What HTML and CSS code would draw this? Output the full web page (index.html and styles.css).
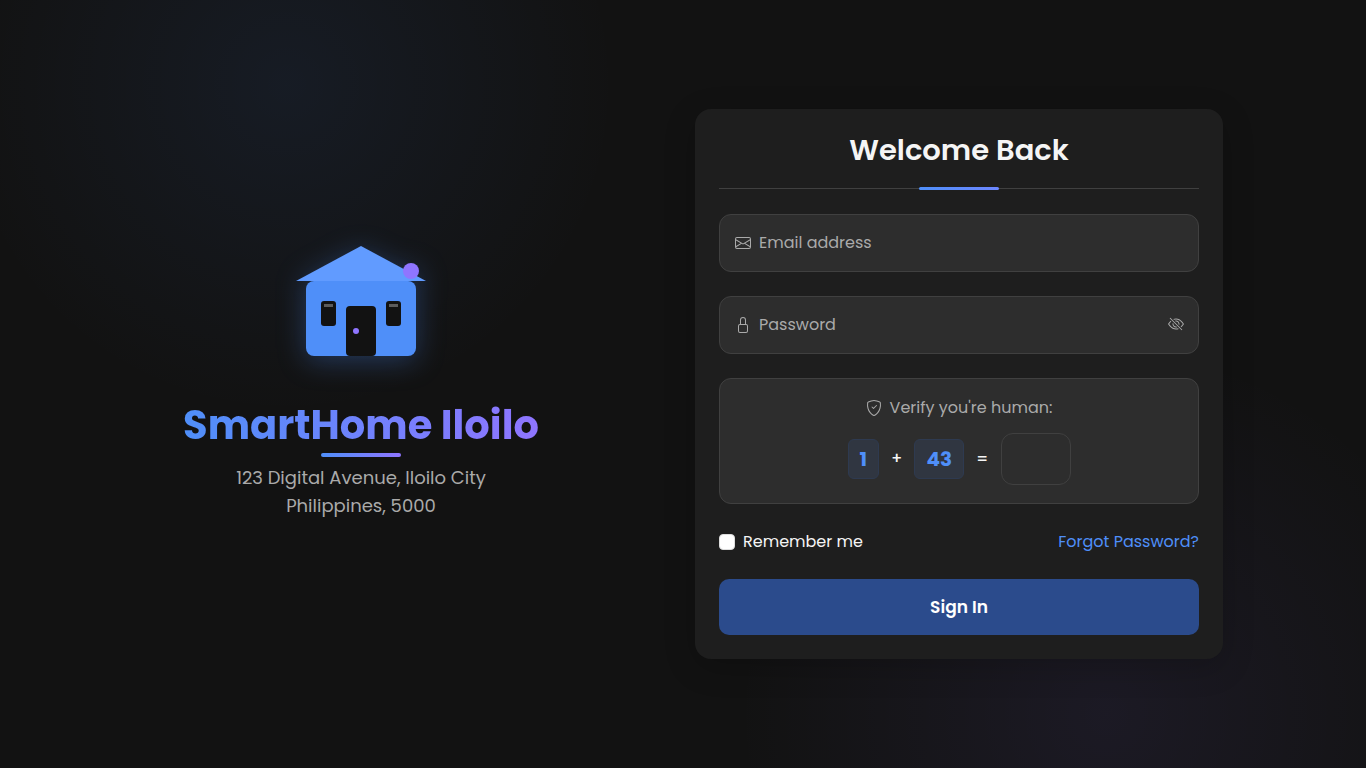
FILE: index.html
```html
<!DOCTYPE html>
<html lang="en">
<head>
<meta charset="utf-8">
<meta name="viewport" content="width=device-width, initial-scale=1">
<title>SmartHome Iloilo - Sign In</title>
<link rel="stylesheet" href="styles.css">
</head>
<body>
<main class="page">
  <section class="brand">
    <svg class="house" viewBox="0 0 130 110" aria-hidden="true">
      <rect x="10" y="35" width="110" height="75" rx="8" fill="#4f8ff9"/>
      <path d="M0 35 65 0l65 35z" fill="#619bff"/>
      <rect x="25" y="55" width="15" height="25" rx="3" fill="#121212"/>
      <rect x="28" y="58" width="9" height="3" fill="#5c5c5c"/>
      <rect x="90" y="55" width="15" height="25" rx="3" fill="#121212"/>
      <rect x="93" y="58" width="9" height="3" fill="#5c5c5c"/>
      <rect x="50" y="60" width="30" height="50" rx="4" fill="#121212"/>
      <circle cx="60" cy="85" r="3" fill="#8f75ff"/>
      <circle cx="115" cy="25" r="8" fill="#8f75ff"/>
    </svg>
    <h1 class="brand-name">SmartHome Iloilo</h1>
    <p class="address">123 Digital Avenue, Iloilo City<br>Philippines, 5000</p>
  </section>

  <section class="login">
    <form class="card">
      <h2 class="card-title">Welcome Back</h2>

      <div class="field">
        <input class="field-input" type="email" id="email" placeholder=" ">
        <label class="field-label" for="email">
          <svg class="icon" viewBox="0 0 16 16" aria-hidden="true"><path d="M0 4a2 2 0 0 1 2-2h12a2 2 0 0 1 2 2v8a2 2 0 0 1-2 2H2a2 2 0 0 1-2-2zm2-1a1 1 0 0 0-1 1v.217l7 4.2 7-4.2V4a1 1 0 0 0-1-1zm13 2.383-4.708 2.825L15 11.105zm-.034 6.876-5.64-3.471L8 9.583l-1.326-.795-5.64 3.47A1 1 0 0 0 2 13h12a1 1 0 0 0 .966-.741M1 11.105l4.708-2.897L1 5.383z"/></svg>
          Email address
        </label>
      </div>

      <div class="field">
        <input class="field-input" type="password" id="password" placeholder=" ">
        <label class="field-label" for="password">
          <svg class="icon" viewBox="0 0 16 16" aria-hidden="true"><path d="M8 1a2 2 0 0 1 2 2v4H6V3a2 2 0 0 1 2-2m3 6V3a3 3 0 0 0-6 0v4a2 2 0 0 0-2 2v5a2 2 0 0 0 2 2h6a2 2 0 0 0 2-2V9a2 2 0 0 0-2-2M5 8h6a1 1 0 0 1 1 1v5a1 1 0 0 1-1 1H5a1 1 0 0 1-1-1V9a1 1 0 0 1 1-1"/></svg>
          Password
        </label>
        <button class="reveal" type="button" aria-label="Show password">
          <svg class="icon" viewBox="0 0 16 16" aria-hidden="true"><path d="M13.359 11.238C15.06 9.72 16 8 16 8s-3-5.5-8-5.5a7 7 0 0 0-2.79.588l.77.771A6 6 0 0 1 8 3.5c2.12 0 3.879 1.168 5.168 2.457A13 13 0 0 1 14.828 8q-.086.13-.195.288c-.335.48-.83 1.12-1.465 1.755q-.247.248-.517.486z"/><path d="M11.297 9.176a3.5 3.5 0 0 0-4.474-4.474l.823.823a2.5 2.5 0 0 1 2.829 2.829zm-2.943 1.299.822.822a3.5 3.5 0 0 1-4.474-4.474l.823.823a2.5 2.5 0 0 0 2.829 2.829"/><path d="M3.35 5.47q-.27.24-.518.487A13 13 0 0 0 1.172 8l.195.288c.335.48.83 1.12 1.465 1.755C4.121 11.332 5.881 12.5 8 12.5c.716 0 1.39-.133 2.02-.36l.77.772A7 7 0 0 1 8 13.5C3 13.5 0 8 0 8s.939-1.721 2.641-3.238l.708.709zm10.296 8.884-12-12 .708-.708 12 12z"/></svg>
        </button>
      </div>

      <div class="captcha">
        <label class="captcha-label" for="answer">
          <svg class="icon" viewBox="0 0 16 16" aria-hidden="true"><path d="M5.338 1.59a61 61 0 0 0-2.837.856.48.48 0 0 0-.328.39c-.554 4.157.726 7.19 2.253 9.188a10.7 10.7 0 0 0 2.287 2.233c.346.244.652.42.893.533q.18.085.293.118a1 1 0 0 0 .101.025 1 1 0 0 0 .1-.025q.114-.034.294-.118c.24-.113.547-.29.893-.533a10.7 10.7 0 0 0 2.287-2.233c1.527-1.997 2.807-5.031 2.253-9.188a.48.48 0 0 0-.328-.39c-.651-.213-1.75-.56-2.837-.855C9.552 1.29 8.531 1.067 8 1.067c-.53 0-1.552.223-2.662.524zM5.072.56C6.157.265 7.31 0 8 0s1.843.265 2.928.56c1.11.3 2.229.655 2.887.87a1.54 1.54 0 0 1 1.044 1.262c.596 4.477-.787 7.795-2.465 9.99a11.8 11.8 0 0 1-2.517 2.453 7 7 0 0 1-1.048.625c-.28.132-.581.24-.829.24s-.548-.108-.829-.24a7 7 0 0 1-1.048-.625 11.8 11.8 0 0 1-2.517-2.453C1.928 10.487.545 7.169 1.141 2.692A1.54 1.54 0 0 1 2.185 1.43 63 63 0 0 1 5.072.56"/><path d="M10.854 5.146a.5.5 0 0 1 0 .708l-3 3a.5.5 0 0 1-.708 0l-1.5-1.5a.5.5 0 1 1 .708-.708L7.5 7.793l2.646-2.647a.5.5 0 0 1 .708 0"/></svg>
          Verify you're human:
        </label>
        <div class="sum">
          <span class="number">1</span>
          <span>+</span>
          <span class="number">43</span>
          <span>=</span>
          <input class="answer" type="text" id="answer" inputmode="numeric">
        </div>
      </div>

      <div class="options">
        <label class="remember" for="remember"><input class="check" type="checkbox" id="remember">Remember me</label>
        <a class="forgot" href="#">Forgot Password?</a>
      </div>

      <button class="submit" type="submit">Sign In</button>
    </form>
  </section>
</main>
</body>
</html>
```

FILE: styles.css
```css
* {
  box-sizing: border-box;
}

body {
  margin: 0;
  color: #f5f5f5;
  background-color: #121212;
  font: 16px/24px Poppins, Inter, "Open Sans", sans-serif;
}

input,
button {
  font: inherit;
  color: inherit;
}

.page {
  display: grid;
  grid-template-columns: 1fr 1fr;
  align-items: center;
  min-height: 100vh;
  padding: 24px 108px 24px 62px;
  background:
    radial-gradient(circle at 21% 11%, rgba(77, 141, 255, 0.08), transparent 330px),
    radial-gradient(circle at 81% 93%, rgba(143, 117, 255, 0.08), transparent 370px);
}

.brand {
  display: flex;
  flex-direction: column;
  align-items: center;
  padding-bottom: 2px;
  text-align: center;
}

.house {
  width: 130px;
  height: 110px;
  filter: drop-shadow(0 5px 14px rgba(77, 141, 255, 0.3));
}

.brand-name {
  display: flex;
  flex-direction: column;
  align-items: center;
  gap: 3px;
  margin: 44px 0 0;
  font-size: 40px;
  line-height: 50px;
  font-weight: 700;
  color: transparent;
  background: linear-gradient(90deg, #4f8ff9, #8f75ff);
  background-clip: text;
}

.brand-name::after {
  content: "";
  width: 80px;
  height: 4px;
  border-radius: 2px;
  background: linear-gradient(90deg, #4f8ff9, #8f75ff);
}

.address {
  margin: 7px 0 0;
  font-size: 18px;
  line-height: 28px;
  color: #aaa;
}

.login {
  display: flex;
  justify-content: center;
}

.card {
  display: flex;
  flex-direction: column;
  gap: 24px;
  width: 100%;
  max-width: 528px;
  padding: 24px;
  border-radius: 16px;
  background: #1e1e1e;
  box-shadow: 0 8px 32px rgba(0, 0, 0, 0.2);
}

.card-title {
  display: flex;
  flex-direction: column;
  align-items: center;
  gap: 20px;
  margin: 0;
  font-size: 29px;
  line-height: 34px;
  font-weight: 600;
  background: linear-gradient(#404040, #404040) 0 55px / 100% 1px no-repeat;
}

.card-title::after {
  content: "";
  width: 80px;
  height: 3px;
  border-radius: 2px;
  background: linear-gradient(90deg, #4f8ff9, #6c86ff);
}

.field {
  display: grid;
  grid-template-columns: 1fr 46px;
  height: 58px;
}

.field-input {
  grid-area: 1 / 1 / 2 / 3;
  width: 100%;
  padding: 0 48px 0 16px;
  border: 1px solid #404040;
  border-radius: 12px;
  background: #2d2d2d;
}

.field-label {
  grid-area: 1 / 1;
  display: flex;
  align-items: center;
  gap: 8px;
  padding-left: 16px;
  color: #aaa;
  pointer-events: none;
}

.field-input:not(:placeholder-shown) + .field-label {
  visibility: hidden;
}

.icon {
  flex: none;
  width: 16px;
  height: 16px;
  fill: currentColor;
}

.reveal {
  grid-area: 1 / 2;
  display: flex;
  align-items: center;
  justify-content: center;
  padding: 0 0 2px;
  border: 0;
  background: none;
  color: #aaa;
}

.captcha {
  display: flex;
  flex-direction: column;
  align-items: center;
  gap: 13px;
  padding: 17px 17px 18px;
  border: 1px solid #404040;
  border-radius: 12px;
  background: #2d2d2d;
}

.captcha-label {
  display: flex;
  align-items: center;
  gap: 8px;
  color: #aaa;
}

.sum {
  display: flex;
  align-items: center;
  gap: 12px;
  font-weight: 500;
}

.number {
  padding: 7px 11px;
  border: 1px solid #2e3a50;
  border-radius: 6px;
  font-size: 20px;
  font-weight: 700;
  color: #4f8ff9;
  background: #303641;
}

.answer {
  width: 70px;
  height: 52px;
  border: 1px solid #404040;
  border-radius: 12px;
  background: #2d2d2d;
  text-align: center;
}

.options {
  display: flex;
  align-items: center;
  justify-content: space-between;
  min-height: 27px;
}

.remember {
  display: flex;
  align-items: center;
  gap: 8px;
}

.check {
  appearance: none;
  width: 16px;
  height: 16px;
  margin: 0;
  border: 1px solid #ddd;
  border-radius: 4px;
  background: #fff;
}

.check:checked {
  background: #4f8ff9;
}

.forgot {
  color: #4f8ff9;
  text-decoration: none;
}

.submit {
  height: 56px;
  border: 0;
  border-radius: 10px;
  font-size: 17px;
  font-weight: 600;
  color: #fff;
  background: #2b4b8c;
}
```
